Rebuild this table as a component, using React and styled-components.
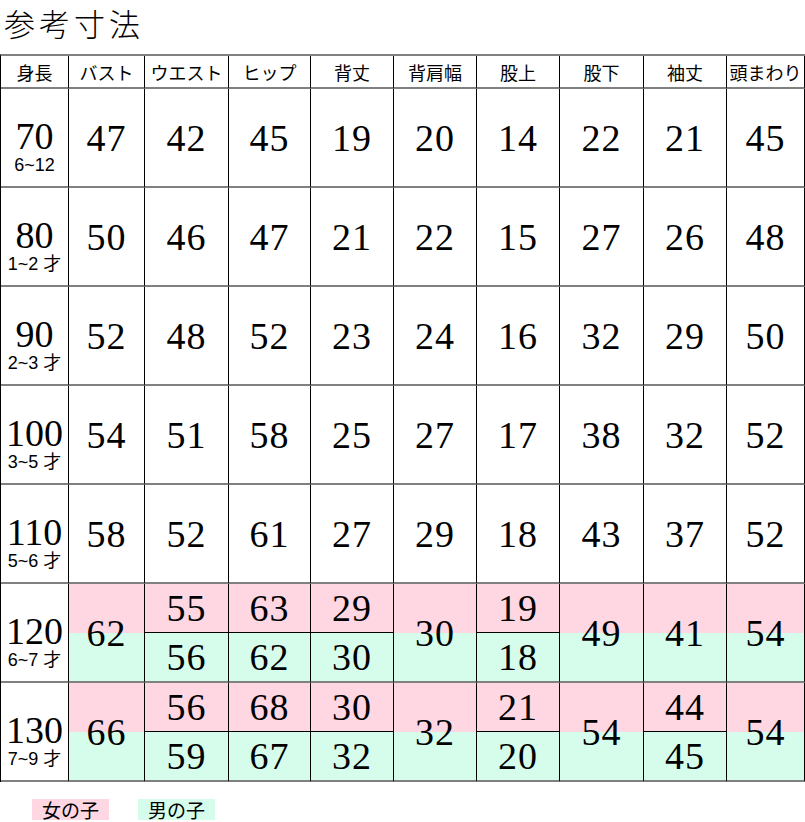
import React from 'react'
import styled, { createGlobalStyle } from 'styled-components'

const GlobalStyle = createGlobalStyle`
  html, body { margin: 0; padding: 0; background: #fff; }
  body { font-family: "Noto Sans CJK JP", "Liberation Sans", sans-serif; color: #000; }
`

const PINK = '#ffd7e3'
const GREEN = '#d6fdec'

const headers = ['身長', 'バスト', 'ウエスト', 'ヒップ', '背丈', '背肩幅', '股上', '股下', '袖丈', '頭まわり']

const rows = [
  { h: '70', age: '6~12', v: [47, 42, 45, 19, 20, 14, 22, 21, 45] },
  { h: '80', age: '1~2 才', v: [50, 46, 47, 21, 22, 15, 27, 26, 48] },
  { h: '90', age: '2~3 才', v: [52, 48, 52, 23, 24, 16, 32, 29, 50] },
  { h: '100', age: '3~5 才', v: [54, 51, 58, 25, 27, 17, 38, 32, 52] },
  { h: '110', age: '5~6 才', v: [58, 52, 61, 27, 29, 18, 43, 37, 52] },
  { h: '120', age: '6~7 才', colored: true, v: [62, [55, 56], [63, 62], [29, 30], 30, [19, 18], 49, 41, 54] },
  { h: '130', age: '7~9 才', colored: true, v: [66, [56, 59], [68, 67], [30, 32], 32, [21, 20], 54, [44, 45], 54] },
]

const Page = styled.div`
  width: 805px;
`

const Title = styled.h1`
  margin: 0;
  height: 54px;
  padding: 0 0 0 4px;
  box-sizing: border-box;
  font-family: "Noto Sans CJK JP", sans-serif;
  font-weight: 300;
  font-size: 31px;
  line-height: 46px;
  letter-spacing: 4px;
`

const Table = styled.div`
  display: grid;
  grid-template-columns: 68px 76px 84px 82px 83px 83px 83px 84px 83px 78px;
  grid-template-rows: 33px repeat(7, 99px);
  border-top: 2px solid #808080;
  border-left: 1px solid #000;
  width: 805px;
  box-sizing: border-box;
`

const Cell = styled.div`
  box-sizing: border-box;
  border-right: 1px solid #000;
  border-bottom: 2px solid #808080;
  display: flex;
  flex-direction: column;
  align-items: center;
  justify-content: center;
  background: ${p => (p.$colored ? `linear-gradient(to bottom, ${PINK} 50%, ${GREEN} 50%)` : '#fff')};
  min-width: 0;
`

const HeadText = styled.span`
  font-family: "Noto Sans CJK JP", sans-serif;
  font-size: 18px;
  line-height: 1;
  white-space: nowrap;
`

const Num = styled.span`
  font-family: "Liberation Serif", serif;
  font-size: 38px;
  line-height: 38px;
  letter-spacing: 1px;
`

const HeightNum = styled(Num)`
  margin-top: 16px;
  letter-spacing: 0;
`

const Age = styled.span`
  font-family: "Liberation Sans", "Noto Sans CJK JP", sans-serif;
  font-size: 18px;
  line-height: 18px;
  margin-top: 1px;
  white-space: nowrap;
`

const Half = styled.div`
  flex: 1;
  align-self: stretch;
  display: flex;
  align-items: center;
  justify-content: center;
  background: ${p => (p.$top ? PINK : GREEN)};
  border-top: ${p => (p.$top ? 'none' : '1px solid #000')};
`

const Legend = styled.div`
  display: flex;
  gap: 29px;
  padding: 17px 0 0 32px;
`

const Tag = styled.span`
  display: inline-flex;
  align-items: center;
  height: 21px;
  line-height: 1;
  padding: 0 10px;
  font-size: 19px;
  background: ${p => p.$color};
`

const renderValue = (val, colored, key) => {
  if (Array.isArray(val)) {
    return (
      <Cell key={key}>
        <Half $top><Num>{val[0]}</Num></Half>
        <Half><Num>{val[1]}</Num></Half>
      </Cell>
    )
  }
  return (
    <Cell key={key} $colored={colored}>
      <Num>{val}</Num>
    </Cell>
  )
}

export default function App() {
  return (
    <Page>
      <GlobalStyle />
      <Title>参考寸法</Title>
      <Table>
        {headers.map(h => (
          <Cell key={h}><HeadText>{h}</HeadText></Cell>
        ))}
        {rows.map(r => (
          <React.Fragment key={r.h}>
            <Cell>
              <HeightNum>{r.h}</HeightNum>
              <Age>{r.age}</Age>
            </Cell>
            {r.v.map((val, i) => renderValue(val, r.colored, `${r.h}-${i}`))}
          </React.Fragment>
        ))}
      </Table>
      <Legend>
        <Tag $color={PINK}>女の子</Tag>
        <Tag $color={GREEN}>男の子</Tag>
      </Legend>
    </Page>
  )
}
